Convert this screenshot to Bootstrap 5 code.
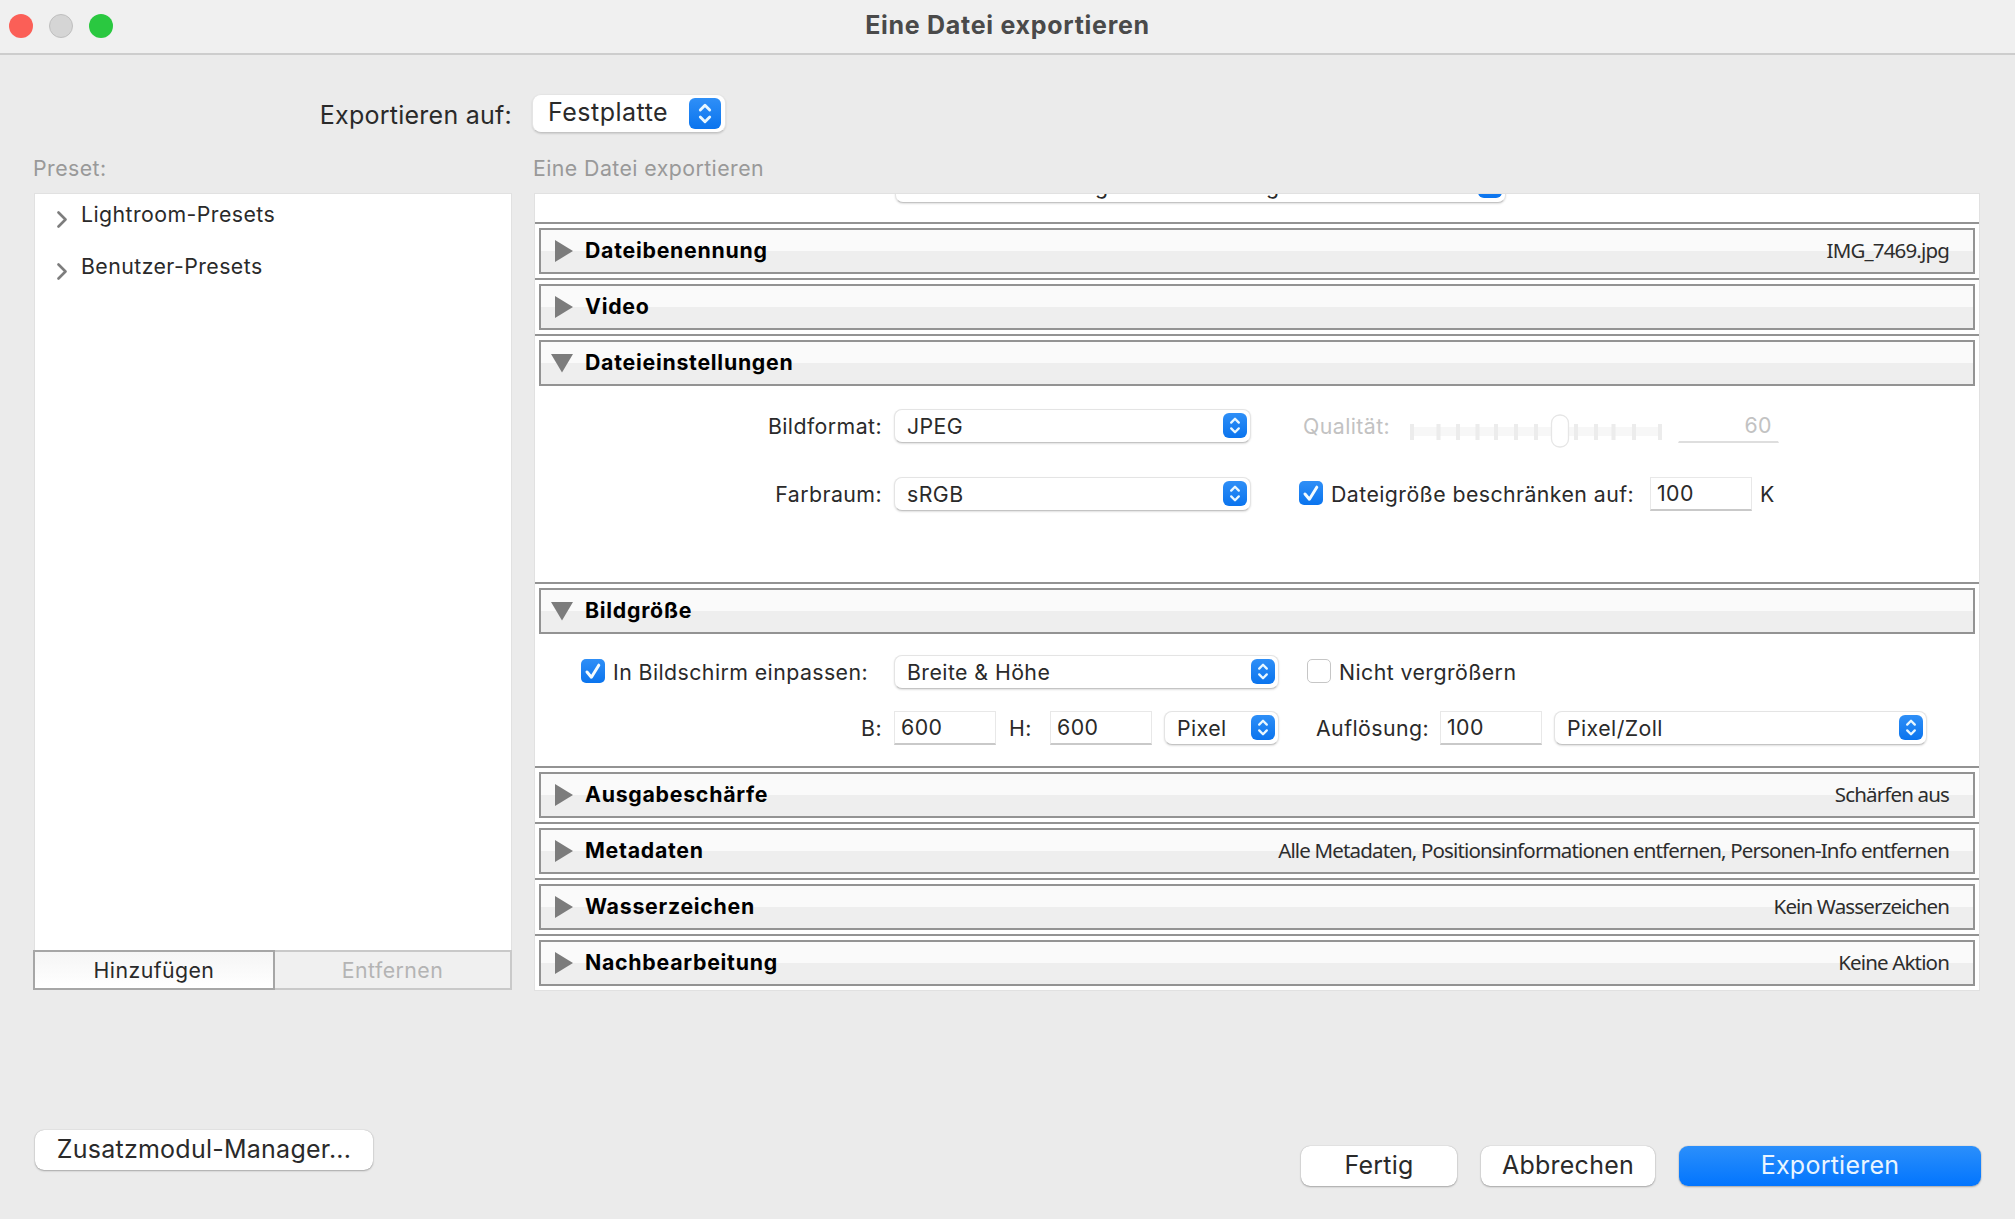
<!DOCTYPE html>
<html lang="de">
<head>
<meta charset="utf-8">
<title>Eine Datei exportieren</title>
<link href="https://cdn.jsdelivr.net/npm/bootstrap@5.3.0/dist/css/bootstrap.min.css" rel="stylesheet">
<style>
body{background:#ebebeb;color:#2a2a2a;font-family:Inter,"Liberation Sans",sans-serif;font-size:21.3px;line-height:28px;width:2015px;height:1219px;overflow:hidden;white-space:nowrap;letter-spacing:.43px}
.titlebar{height:55px;background:#f0f0f0;border-bottom:2px solid #cdcdcd;padding-left:9px}
.light-dot{width:24px;height:24px;border-radius:50%;margin:0 16px 1px 0}
.dot-close{background:#fb5f57}
.dot-min{background:#d5d5d5;border:1px solid #bfbfbf}
.dot-max{background:#2ac840}
.win-title{font-size:25px;font-weight:700;color:#4a4a4a;padding-bottom:3px;letter-spacing:.72px}
.big{font-size:25px;line-height:34px;letter-spacing:.25px}
.target-row{height:97px;padding-top:39px}
.target-label{width:512px;padding-top:4px;margin-right:20px}
.cap-line{color:#999;height:41px;padding:2px 0 0 33px}
.cap-left{width:500px}
.popup{background:#fff;border:1px solid #e4e4e4;border-bottom-color:#c4c4c4;border-radius:8px;box-shadow:0 1px 2px rgba(0,0,0,.13);height:34px;padding:0 3px 1px 12px;flex:none}
.popup-big{height:39px;width:194px;border-radius:9px;padding:0 4px 1px 15px;letter-spacing:.5px}
.popup-big span{padding-bottom:2px}
.step{background:linear-gradient(#2f8ff7,#0a74ee);border-radius:6px;flex:none}
.panels{padding-left:33px;height:798px}
.left-pane{width:479px;margin-right:22px}
.tree{height:757px;background:#fff;border:1px solid #e1e1e1;border-bottom:0;margin-left:1px;padding:6px 0 0 22px}
.tree-row{height:52px}
.tree-row svg{margin:11px 14px 0 0}
.list-buttons{height:40px}
.flat-btn{height:40px;border:2px solid #a6a6a6;background:linear-gradient(#f5f5f5,#fff);width:242px}
.flat-off{border-color:#c9c9c9;border-left:0;background:#f0f0f0;color:#b4b4b4;width:237px}
.right-pane{width:1446px;background:#fff;border:1px solid #e1e1e1;height:798px;overflow:hidden}
.clip{height:28px;padding-left:360px;overflow:hidden}
.clip .popup{width:611px;margin-top:-25px;letter-spacing:0}
.clip-a{margin-left:187px}
.clip-b{margin-left:158px}
.sect{border-top:2px solid #939393;padding:4px}
.sect-head{height:46px;border:2px solid #939393;background:linear-gradient(#fafafa 50%,#eeeeee 50%);padding:0 24px 2px 10px}
.sect-head svg{margin:1px 10px 0 0}
.sect-head b{color:#000;font-weight:700;letter-spacing:.74px}
.info{font-family:"Noto Sans",sans-serif;font-size:20.5px;letter-spacing:-.84px;color:#2d2d2d}
.sect-body{margin:0 -4px -4px}
.body-file{height:196px;padding-top:23px}
.body-size{height:132px;padding-top:21px}
.line{height:34px}
.line-third{margin-top:34px}
.line-second{margin-top:22px}
.label-col{width:348px;padding-right:1px;margin-right:11px}
.off{color:#c2c2c2}
.w-format{width:357px}
.w-fit{width:385px}
.w-unit{width:115px}
.w-dpi{width:373px}
.quality{width:106px;margin-left:52px}
.slider{margin-top:9px}
.limit{width:319px;margin-left:8px}
.fit-label{width:281px;margin-left:8px}
.h-label{width:41px;margin-left:13px}
.dpi-label{width:124px;margin-left:37px}
.gap-s{margin-left:12px}
.entry{height:34px;background:#fff;border:1px solid #e8e8e8;border-bottom:2px solid #c9c9c9;padding:1px 0 0 6px;width:102px}
.entry-off{border-color:#fff;border-bottom-color:#dedede;width:101px;margin-left:15px;padding-right:6px}
.tick-box{width:24px;height:24px;border-radius:5px;background:#fff;border:1px solid #c6c6c6;flex:none;margin-bottom:2px}
.tick-on{border:0;background:linear-gradient(#2f8ff7,#0a74ee)}
.at-limit{margin-left:48px}
.at-fit{margin-left:46px}
.at-grow{margin-left:28px}
.push{background:#fff;border-radius:9px;height:40px;box-shadow:0 0 1px rgba(0,0,0,.3),0 1px 2px rgba(0,0,0,.28);padding-bottom:2px}
.push-main{background:linear-gradient(#2b8ffb,#0275fe);color:#eaf5ff;width:302px}
.push-plugin{width:338px}
.push-done{width:156px}
.push-cancel{width:174px;margin:0 24px}
.foot{padding:139px 34px 0 35px}
</style>
<script src="https://cdn.jsdelivr.net/npm/bootstrap@5.3.0/dist/js/bootstrap.bundle.min.js"></script>
</head>
<body>
<svg class="d-none">
<symbol id="step" viewBox="0 0 24 25"><path d="M8.200 9.600 12 5.800l3.800 3.800M8.200 15.400l3.800 3.800 3.800-3.800" fill="none" stroke="#e8f7ff" stroke-width="2.300" stroke-linecap="round" stroke-linejoin="round"/></symbol>
<symbol id="check" viewBox="0 0 24 24"><path d="M6 13 10.400 18.200 17.800 6.200" fill="none" stroke="#f2fbff" stroke-width="3" stroke-linecap="round" stroke-linejoin="round"/></symbol>
<symbol id="right" viewBox="0 0 24 22"><path d="M4 0v22l18-11z" fill="#7c7c7c"/></symbol>
<symbol id="down" viewBox="0 0 24 22"><path d="M0 2h22l-11 18.500z" fill="#7c7c7c"/></symbol>
<symbol id="chev" viewBox="0 0 10 17"><path d="M1.500 1.500 8.500 8.500 1.500 15.500" fill="none" stroke="#7d7d7d" stroke-width="2.600" stroke-linecap="round" stroke-linejoin="round"/></symbol>
</svg>

<header class="titlebar d-flex align-items-center position-relative">
<span class="light-dot dot-close"></span><span class="light-dot dot-min"></span><span class="light-dot dot-max"></span>
<div class="win-title position-absolute start-0 end-0 text-center">Eine Datei exportieren</div>
</header>

<div class="target-row d-flex big align-items-start">
<div class="target-label text-end">Exportieren auf:</div>
<div class="popup popup-big d-flex align-items-center justify-content-between"><span>Festplatte</span><svg class="step" width="32" height="31"><use href="#step"/></svg></div>
</div>
<div class="cap-line d-flex"><div class="cap-left">Preset:</div><div>Eine Datei exportieren</div></div>

<main class="panels d-flex">
<div class="left-pane">
<div class="tree">
<div class="tree-row d-flex align-items-start"><svg width="10" height="17"><use href="#chev"/></svg>Lightroom-Presets</div>
<div class="tree-row d-flex align-items-start"><svg width="10" height="17"><use href="#chev"/></svg>Benutzer-Presets</div>
</div>
<div class="list-buttons d-flex">
<div class="flat-btn d-flex align-items-center justify-content-center">Hinzufügen</div>
<div class="flat-btn flat-off d-flex align-items-center justify-content-center">Entfernen</div>
</div>
</div>

<div class="right-pane">
<div class="clip d-flex align-items-start"><div class="popup d-flex align-items-center"><span class="clip-a">g</span><span class="clip-b">g</span><svg class="step ms-auto" width="24" height="24"><use href="#step"/></svg></div></div>

<section class="sect"><div class="sect-head d-flex align-items-center"><svg width="24" height="22"><use href="#right"/></svg><b>Dateibenennung</b><span class="info ms-auto">IMG_7469.jpg</span></div></section>
<section class="sect"><div class="sect-head d-flex align-items-center"><svg width="24" height="22"><use href="#right"/></svg><b>Video</b></div></section>
<section class="sect"><div class="sect-head d-flex align-items-center"><svg width="24" height="22"><use href="#down"/></svg><b>Dateieinstellungen</b></div>
<div class="sect-body body-file">
<div class="line d-flex align-items-center">
<div class="label-col text-end">Bildformat:</div>
<div class="popup w-format d-flex align-items-center justify-content-between">JPEG<svg class="step" width="24" height="25"><use href="#step"/></svg></div>
<div class="off quality">Qualität:</div>
<svg class="slider" width="254" height="36" viewBox="0 0 254 36">
<path d="M3 14h249v9H3z" fill="#f7f7f7"/>
<path d="M3 11v16M29.500 11v16M49 11v16M68.500 11v16M87 11v16M107 11v16M127 11v16M167 11v16M187 11v16M204.500 11v16M225 11v16M251 11v16" stroke="#ececec" stroke-width="4"/>
<rect x="142.500" y="2" width="17" height="32" rx="8" fill="#fff" stroke="#e6e6e6" stroke-width="1.300"/>
</svg>
<div class="entry entry-off off text-end">60</div>
</div>
<div class="line line-third d-flex align-items-center">
<div class="label-col text-end">Farbraum:</div>
<div class="popup w-format d-flex align-items-center justify-content-between">sRGB<svg class="step" width="24" height="25"><use href="#step"/></svg></div>
<svg class="tick-box tick-on at-limit"><use href="#check"/></svg>
<div class="limit">Dateigröße beschränken auf:</div>
<div class="entry">100</div><div class="ms-2">K</div>
</div>
</div></section>
<section class="sect"><div class="sect-head d-flex align-items-center"><svg width="24" height="22"><use href="#down"/></svg><b>Bildgröße</b></div>
<div class="sect-body body-size">
<div class="line d-flex align-items-center">
<svg class="tick-box tick-on at-fit"><use href="#check"/></svg>
<div class="fit-label">In Bildschirm einpassen:</div>
<div class="popup w-fit d-flex align-items-center justify-content-between">Breite &amp; Höhe<svg class="step" width="24" height="25"><use href="#step"/></svg></div>
<div class="tick-box at-grow"></div>
<div class="ms-2">Nicht vergrößern</div>
</div>
<div class="line line-second d-flex align-items-center">
<div class="label-col text-end">B:</div>
<div class="entry">600</div>
<div class="h-label">H:</div>
<div class="entry">600</div>
<div class="popup w-unit gap-s d-flex align-items-center justify-content-between">Pixel<svg class="step" width="24" height="25"><use href="#step"/></svg></div>
<div class="dpi-label">Auflösung:</div>
<div class="entry">100</div>
<div class="popup w-dpi gap-s d-flex align-items-center justify-content-between">Pixel/Zoll<svg class="step" width="24" height="25"><use href="#step"/></svg></div>
</div>
</div></section>
<section class="sect"><div class="sect-head d-flex align-items-center"><svg width="24" height="22"><use href="#right"/></svg><b>Ausgabeschärfe</b><span class="info ms-auto">Schärfen aus</span></div></section>
<section class="sect"><div class="sect-head d-flex align-items-center"><svg width="24" height="22"><use href="#right"/></svg><b>Metadaten</b><span class="info ms-auto">Alle Metadaten, Positionsinformationen entfernen, Personen-Info entfernen</span></div></section>
<section class="sect"><div class="sect-head d-flex align-items-center"><svg width="24" height="22"><use href="#right"/></svg><b>Wasserzeichen</b><span class="info ms-auto">Kein Wasserzeichen</span></div></section>
<section class="sect"><div class="sect-head d-flex align-items-center"><svg width="24" height="22"><use href="#right"/></svg><b>Nachbearbeitung</b><span class="info ms-auto">Keine Aktion</span></div></section>
</div>
</main>

<footer class="foot d-flex big align-items-start">
<div class="push push-plugin d-flex align-items-center justify-content-center">Zusatzmodul-Manager...</div>
<div class="d-flex ms-auto pt-3">
<div class="push push-done d-flex align-items-center justify-content-center">Fertig</div>
<div class="push push-cancel d-flex align-items-center justify-content-center">Abbrechen</div>
<div class="push push-main d-flex align-items-center justify-content-center">Exportieren</div>
</div>
</footer>
</body>
</html>
